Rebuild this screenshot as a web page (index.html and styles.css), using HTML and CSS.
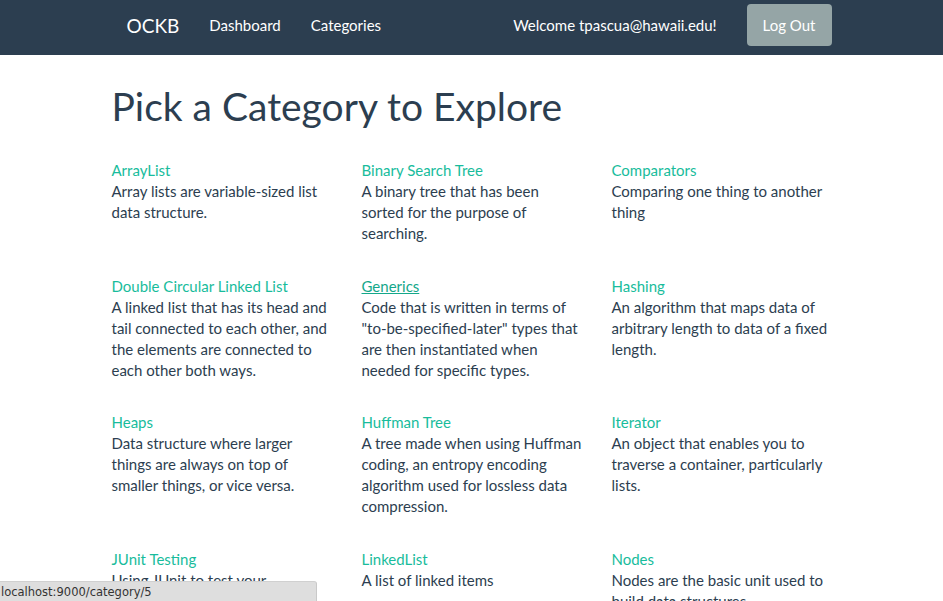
FILE: index.html
```html
<!DOCTYPE html>
<html lang="en">
<head>
<meta charset="utf-8">
<title>OCKB</title>
<link rel="stylesheet" href="styles.css">
</head>
<body>
<nav class="navbar">
  <div class="container nav-inner">
    <a class="brand" href="#">OCKB</a>
    <a class="nav-link" href="#">Dashboard</a>
    <a class="nav-link" href="#">Categories</a>
    <span class="welcome">Welcome tpascua@hawaii.edu!</span>
    <a class="btn" href="#">Log Out</a>
  </div>
</nav>
<main class="container">
  <h1 class="title">Pick a Category to Explore</h1>
  <div class="grid">
    <div class="item"><a class="cat" href="#">ArrayList</a><p>Array lists are variable-sized list data structure.</p></div>
    <div class="item"><a class="cat" href="#">Binary Search Tree</a><p>A binary tree that has been sorted for the purpose of searching.</p></div>
    <div class="item"><a class="cat" href="#">Comparators</a><p>Comparing one thing to another thing</p></div>
    <div class="item"><a class="cat" href="#">Double Circular Linked List</a><p>A linked list that has its head and tail connected to each other, and the elements are connected to each other both ways.</p></div>
    <div class="item"><a class="cat hover" href="#">Generics</a><p>Code that is written in terms of "to-be-specified-later" types that are then instantiated when needed for specific types.</p></div>
    <div class="item"><a class="cat" href="#">Hashing</a><p>An algorithm that maps data of arbitrary length to data of a fixed length.</p></div>
    <div class="item"><a class="cat" href="#">Heaps</a><p>Data structure where larger things are always on top of smaller things, or vice versa.</p></div>
    <div class="item"><a class="cat" href="#">Huffman Tree</a><p>A tree made when using Huffman coding, an entropy encoding algorithm used for lossless data compression.</p></div>
    <div class="item"><a class="cat" href="#">Iterator</a><p>An object that enables you to traverse a container, particularly lists.</p></div>
    <div class="item"><a class="cat" href="#">JUnit Testing</a><p>Using JUnit to test your implementations.</p></div>
    <div class="item"><a class="cat" href="#">LinkedList</a><p>A list of linked items</p></div>
    <div class="item"><a class="cat" href="#">Nodes</a><p>Nodes are the basic unit used to build data structures.</p></div>
  </div>
</main>
<div class="statusbar">localhost:9000/category/5</div>
</body>
</html>
```
FILE: styles.css
```css
html, body {
  margin: 0;
  padding: 0;
}
body {
  font-family: Lato, "Open Sans", sans-serif;
  font-size: 15px;
  line-height: 21px;
  color: #2c3e50;
  background: #fff;
  overflow: hidden;
}
.container {
  width: 720px;
  margin: 0 auto;
}
.navbar {
  background: #2c3e50;
  height: 55px;
}
.nav-inner {
  display: flex;
  align-items: flex-start;
  height: 55px;
}
.brand {
  color: #fff;
  text-decoration: none;
  font-size: 19px;
  line-height: 21px;
  padding: 15px 15px 0 15px;
}
.nav-link {
  color: #fff;
  text-decoration: none;
  padding: 15px 15px 0 15px;
}
.welcome {
  color: #fff;
  margin-left: auto;
  padding-top: 15px;
  margin-right: 30px;
}
.btn {
  margin-top: 4px;
  background: #95a5a6;
  color: #fff;
  text-decoration: none;
  padding: 11px 16px 10px 16px;
  border-radius: 4px;
}
.title {
  font-size: 39px;
  font-weight: 400;
  line-height: 43px;
  margin: 30px 0 10px 0;
}
.grid {
  display: grid;
  grid-template-columns: repeat(3, 220px);
  column-gap: 30px;
  margin-top: 32px;
}
.item {
  padding-bottom: 21px;
}
.cat {
  color: #18bc9c;
  text-decoration: none;
}
.cat.hover {
  color: #14a88a;
  text-decoration: underline;
}
.item p {
  margin: 0 0 10.5px 0;
}
.statusbar {
  position: fixed;
  left: 0;
  bottom: 0;
  width: 315px;
  height: 19px;
  background: #dedede;
  border-top: 1px solid #d0d0d0;
  border-right: 1px solid #c9c9c9;
  border-top-right-radius: 3px;
  font-family: "DejaVu Sans", sans-serif;
  font-size: 11.5px;
  line-height: 20px;
  color: #333;
  padding-left: 1px;
}
```
